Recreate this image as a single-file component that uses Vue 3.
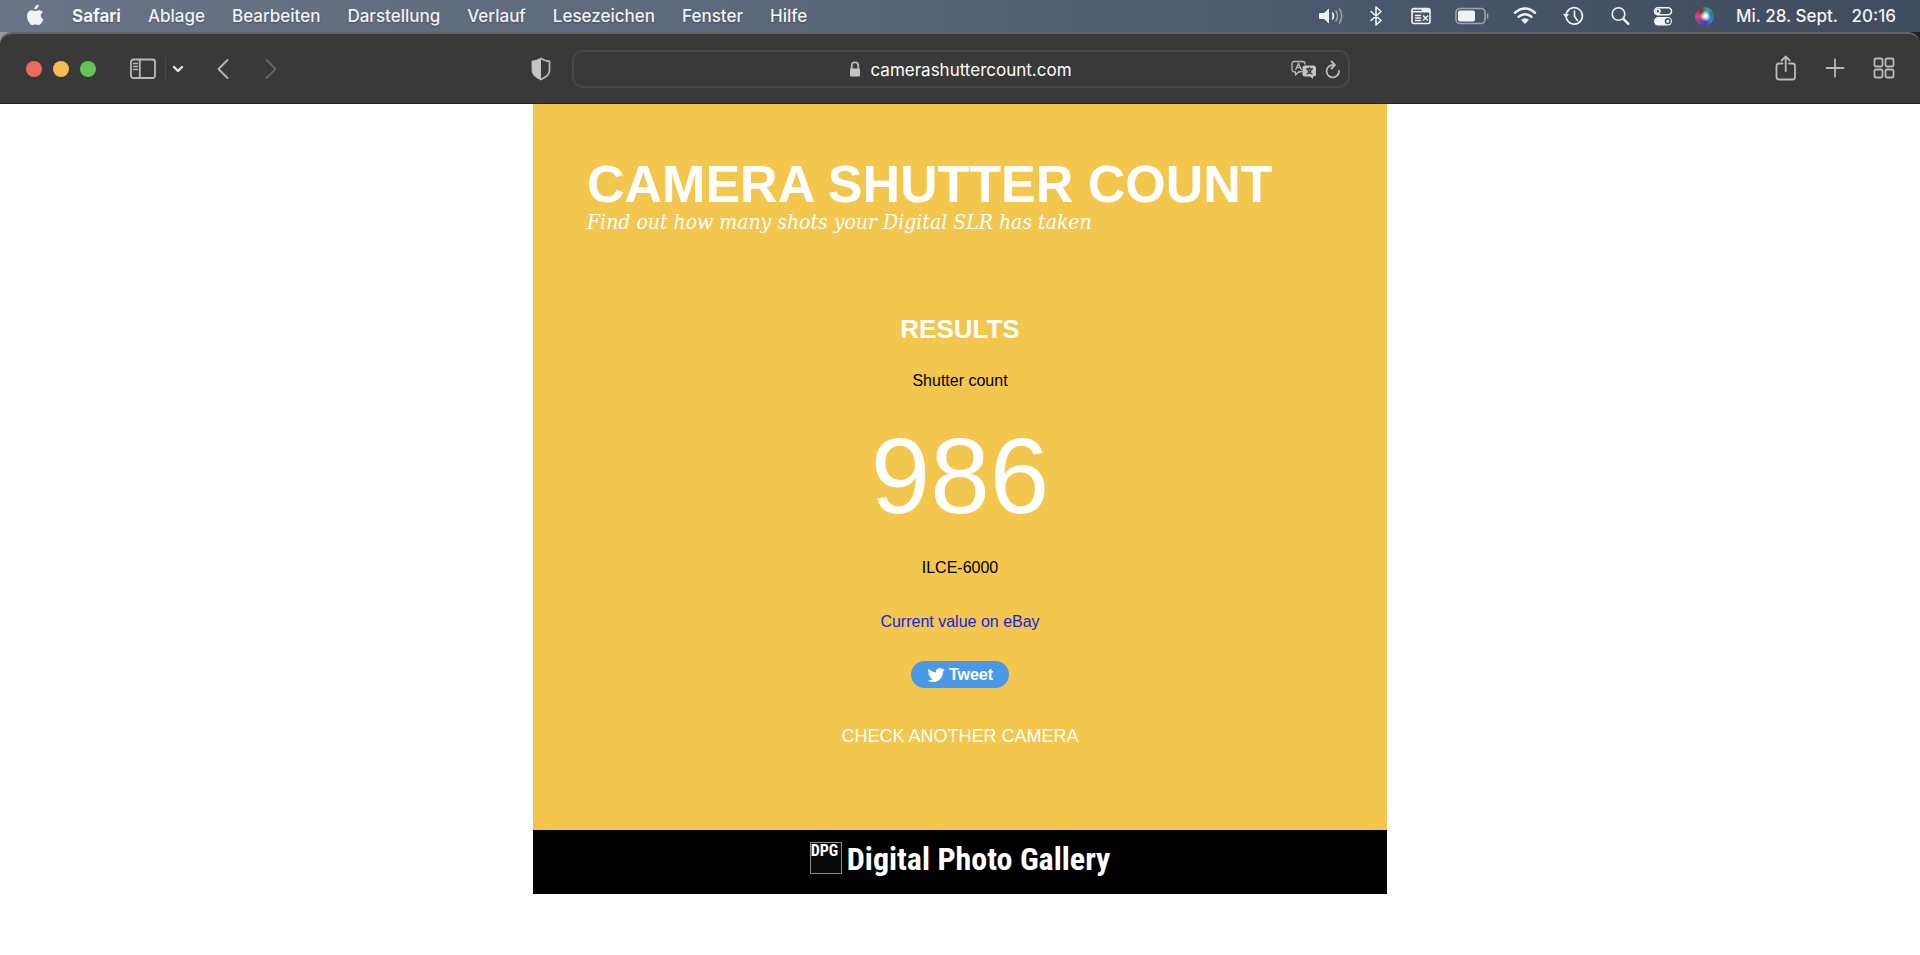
<template>
  <div class="desktop">
    <header class="menubar">
      <nav class="menus">
        <svg class="apple" width="20" height="24" viewBox="0 0 20 24">
          <path d="M13.6 0.6c.2 1.300-.3 2.500-1.100 3.400-.8.900-1.900 1.500-3 1.400-.2-1.200.4-2.400 1.100-3.200.8-.900 2-1.500 3-1.600zM17.800 8.200c-1.300.8-2 1.900-2 3.400 0 1.700 1 3 2.600 3.700-.4 1.300-1.100 2.600-2 3.800-.9 1.200-1.700 2-2.900 2-1.200 0-1.600-.7-3.100-.7-1.500 0-2 .7-3.100.7-1.200 0-2.100-1-3-2.300C2.900 16.900 2 14.500 2 12.100c0-3.600 2.300-5.900 4.800-5.900 1.300 0 2.500.9 3.400.9.800 0 2.200-1 3.900-.9 1.500 0 2.800.7 3.700 2z" />
        </svg>
        <a v-for="item in menus" :key="item" href="#" @click.prevent>{{ item }}</a>
      </nav>

      <div class="status">
        <svg width="24" height="22" viewBox="0 0 24 22">
          <path class="fill" d="M1 8h4l5-4.500v15L5 14H1q-1 0-1-1V9q0-1 1-1z" />
          <path d="M13.500 8q2 3 0 6" />
          <path class="dim" d="M17 6q3 5 0 10M20.500 4q4.500 7 0 14" />
        </svg>
        <svg width="22" height="22" viewBox="0 0 22 22">
          <path d="M6 6.500l10 9-5 4.500V2l5 4.500-10 9" />
        </svg>
        <svg width="24" height="22" viewBox="0 0 24 22">
          <rect x="3" y="3.500" width="18" height="15" rx="2" />
          <path class="fill" d="M3 3.500h18v4H3z" />
          <path class="hole" d="M4.500 5.200h1.500M7.500 5.200h1.500M10.500 5.200h1.500" />
          <path d="M6.500 10.500h5M6.500 13h5M6.500 15.500h5M14.500 11l4 4M18.500 11l-4 4" />
        </svg>
        <svg width="34" height="22" viewBox="0 0 34 22">
          <rect class="dim" x="1" y="3.500" width="29" height="15" rx="4" />
          <rect class="fill" x="3" y="5.500" width="17" height="11" rx="2" />
          <path class="dim" d="M32.500 9v4" />
        </svg>
        <svg width="28" height="22" viewBox="0 0 28 22">
          <path class="thick" d="M4 7.700q10-8.200 20 0M7.600 11.800q6.400-5.200 12.800 0" />
          <path class="fill" d="M10 14.800q4-3.300 8 0l-4 4.200z" />
        </svg>
        <svg width="26" height="22" viewBox="0 0 26 22">
          <path d="M5.300 13a8.200 8.200 0 1 0 .7-6L4.900 9.500M13.500 6v5.500l3 4" />
          <path class="fill" d="M2 9h6l-3 4z" />
        </svg>
        <svg width="22" height="22" viewBox="0 0 22 22">
          <circle cx="9.500" cy="9" r="6.300" />
          <path class="thick" d="M14.300 13.800l5 5" />
        </svg>
        <svg width="20" height="22" viewBox="0 0 20 22">
          <rect x="1.500" y="2.800" width="17" height="7" rx="3.500" />
          <circle cx="5" cy="6.300" r="2" />
          <rect class="fill" x="1" y="12" width="18" height="8.500" rx="4.200" />
          <circle class="hole" cx="14.800" cy="16.200" r="2.300" />
        </svg>
        <span class="siri"></span>
        <time datetime="2022-09-28T20:16">Mi. 28. Sept.&nbsp;&nbsp; 20:16</time>
      </div>
    </header>

    <div class="window">
      <div class="toolbar">
        <div class="tools">
          <div class="lights">
            <button class="light red" aria-label="Schließen"></button>
            <button class="light yellow" aria-label="Minimieren"></button>
            <button class="light green" aria-label="Vollbild"></button>
          </div>
          <button class="icon sidebar" aria-label="Seitenleiste">
            <svg width="26" height="22" viewBox="0 0 26 22">
              <rect x="1" y="1.500" width="24" height="18.500" rx="2.500" />
              <path d="M9.800 1.500V20" />
              <path class="thin" d="M3.500 5.500h4M3.500 8.500h4M3.500 11.500h4" />
            </svg>
          </button>
          <span class="divider"></span>
          <button class="icon chevron" aria-label="Tabgruppen">
            <svg width="12" height="22" viewBox="0 0 12 22">
              <path class="bold" d="M2 9l4 4 4-4" />
            </svg>
          </button>
          <button class="icon back" aria-label="Zurück">
            <svg width="12" height="22" viewBox="0 0 12 22">
              <path d="M10.500 2L1.500 11l9 9" />
            </svg>
          </button>
          <button class="icon forward" aria-label="Vorwärts" disabled>
            <svg width="12" height="22" viewBox="0 0 12 22">
              <path d="M1.500 2l9 9-9 9" />
            </svg>
          </button>
          <button class="icon shield" aria-label="Datenschutzbericht">
            <svg width="20" height="24" viewBox="0 0 20 24">
              <path d="M10 1.500q4 2.500 8.500 3v9q0 5-8.500 9-8.500-4-8.500-9v-9q4.500-.5 8.500-3z" />
              <path class="solid" d="M10 1.500q-4 2.500-8.500 3v9q0 5 8.500 9z" />
            </svg>
          </button>
        </div>

        <form class="address" @submit.prevent>
          <label class="location">
            <svg width="12" height="17" viewBox="0 0 12 17">
              <path d="M2.800 8V4.500q0-3.200 3.200-3.200t3.200 3.200V8" />
              <rect class="solid" x="1" y="7.500" width="10" height="8" rx="1" />
            </svg>
            <input v-model="url" type="text" aria-label="Adresse" spellcheck="false" />
          </label>
          <div class="page-actions">
            <button class="icon" type="button" aria-label="Übersetzen">
              <svg width="26" height="20" viewBox="0 0 26 20">
                <path class="thin" d="M11 11.500L7.500 12 4.500 15v-3H3.500q-2.500 0-2.500-2.500v-6Q1 1.500 3.500 1.500h8Q14 1.500 14 4" />
                <path class="thin" d="M4.700 9.500l2.800-6 2.800 6M5.700 7.700h3.600" />
                <path class="solid" d="M14 5.500h8.500q2.500 0 2.500 2.500v6q0 2.500-2.500 2.500h-.5v2.500l-3-2.500h-5q-2.500 0-2.500-2.500V8q0-2.500 2.500-2.500z" />
                <path class="cut" d="M15.500 9h6M18.500 7.500V9M16.500 9q1 3.500 4.500 5M20.500 9q-1 3.500-4.500 5" />
              </svg>
            </button>
            <button class="icon" type="button" aria-label="Neu laden">
              <svg width="16" height="20" viewBox="0 0 16 20">
                <path d="M7.500 5a6.200 6.200 0 1 0 6.500 6M6.500 1.500L10 5 6.500 8.500" />
              </svg>
            </button>
          </div>
        </form>

        <div class="tools actions">
          <button class="icon" aria-label="Teilen">
            <svg width="22" height="28" viewBox="0 0 22 28">
              <path d="M7.500 8.500H4Q1.500 8.500 1.500 11v11Q1.500 24.500 4 24.500h13.500q2.500 0 2.500-2.500V11q0-2.500-2.500-2.500H14M10.700 16V1.500M6.700 5.500l4-4 4 4" />
            </svg>
          </button>
          <button class="icon" aria-label="Neuer Tab">
            <svg width="20" height="22" viewBox="0 0 20 22">
              <path d="M10 1.500v17M1.500 10h17" />
            </svg>
          </button>
          <button class="icon" aria-label="Tabübersicht">
            <svg width="22" height="24" viewBox="0 0 22 24">
              <rect x="1.500" y="1.500" width="8" height="8" rx="1.500" />
              <rect x="12.500" y="1.500" width="8" height="8" rx="1.500" />
              <rect x="1.500" y="12.500" width="8" height="8" rx="1.500" />
              <rect x="12.500" y="12.500" width="8" height="8" rx="1.500" />
            </svg>
          </button>
        </div>
      </div>

      <div class="page">
        <main class="content">
          <h1>CAMERA SHUTTER COUNT</h1>
          <p class="tagline">Find out how many shots your Digital SLR has taken</p>

          <section class="results">
            <h2>RESULTS</h2>
            <p class="label">Shutter count</p>
            <p class="count">{{ result.count }}</p>
            <p class="model">{{ result.model }}</p>
            <a class="ebay" href="#" @click.prevent>Current value on eBay</a>
            <button class="tweet">
              <svg width="18" height="18" viewBox="0 0 24 24">
                <path d="M23.600 4.900c-.8.400-1.700.6-2.700.8 1-.6 1.700-1.500 2.100-2.600-.9.500-1.900.9-3 1.100A4.700 4.700 0 0 0 12 8.500C8.100 8.300 4.600 6.400 2.300 3.600a4.700 4.700 0 0 0 1.500 6.300c-.8 0-1.500-.2-2.100-.6 0 2.300 1.600 4.300 3.800 4.700-.7.200-1.400.2-2.100.1a4.700 4.700 0 0 0 4.400 3.300A9.500 9.500 0 0 1 .8 19.300 13.400 13.400 0 0 0 8 21.400c8.800 0 13.700-7.400 13.300-14.100.9-.6 1.700-1.500 2.300-2.400z" />
              </svg>
              Tweet
            </button>
            <a class="again" href="#" @click.prevent>CHECK ANOTHER CAMERA</a>
          </section>
        </main>

        <footer class="footer">
          <a class="logo" href="#" @click.prevent>
            <span class="logo-mark">DPG</span>
            <span>Digital Photo Gallery</span>
          </a>
        </footer>
      </div>
    </div>
  </div>
</template>

<script setup>
import { ref } from 'vue'

const menus = [
  'Safari',
  'Ablage',
  'Bearbeiten',
  'Darstellung',
  'Verlauf',
  'Lesezeichen',
  'Fenster',
  'Hilfe',
]

const url = ref('camerashuttercount.com')

const result = ref({
  count: 986,
  model: 'ILCE-6000',
})
</script>

<style>
body {
  margin: 0;
  background: #fff;
}
</style>

<style scoped>
.desktop {
  min-height: 100vh;
  background: linear-gradient(90deg, #999, #4a5568 30%, #1b222e) top / 100% 60px no-repeat;
  font-family: Inter, "Liberation Sans", sans-serif;
}
h1,
h2,
p {
  margin: 0;
}
a {
  color: inherit;
  text-decoration: none;
}
button {
  padding: 0;
  border: none;
  background: none;
  font-family: inherit;
}
svg {
  display: block;
  flex: none;
}

/* menu bar */
.menubar {
  display: flex;
  justify-content: space-between;
  align-items: center;
  height: 32px;
  padding: 0 24px 0 25px;
  box-sizing: border-box;
  background: linear-gradient(90deg, #6b7486, #5c677b 40%, #485469 75%, #404b5f);
  color: #f2f3f5;
  font-size: 17px;
  font-weight: 500;
  line-height: 30px;
  white-space: nowrap;
}
.menus,
.status {
  display: flex;
  align-items: center;
}
.menus {
  gap: 27px;
  text-shadow: 0 1px 2px rgba(0, 0, 0, 0.3);
}
.menus a:first-of-type {
  font-weight: 700;
}
.apple {
  fill: #f2f3f5;
}
.status {
  gap: 22px;
}
.status svg {
  fill: none;
  stroke: #f2f3f5;
  stroke-width: 1.6;
  stroke-linecap: round;
  stroke-linejoin: round;
}
.status .fill {
  fill: #f2f3f5;
  stroke: none;
}
.status .hole {
  stroke: #485469;
}
.status .dim {
  opacity: 0.5;
}
.status .thick {
  stroke-width: 2.4;
}
.siri {
  width: 19px;
  height: 19px;
  border-radius: 50%;
  background:
    radial-gradient(circle at 55% 48%, #fff 8%, rgba(255, 255, 255, 0) 38%),
    conic-gradient(from 20deg, #3aa787, #31758c, #3b7fd0, #2f4b9c, #8c3fa0, #e0457a, #71324c, #3aa787);
}

/* browser window */
.window {
  overflow: hidden;
  border-top: 2px solid #656565;
  border-radius: 12px 12px 0 0;
}
.toolbar {
  display: grid;
  grid-template-columns: 1fr minmax(0, 778px) 1fr;
  align-items: center;
  column-gap: 21px;
  height: 70px;
  padding: 0 25px 0 26px;
  box-sizing: border-box;
  border-bottom: 1px solid #202121;
  background: #383938;
}
.tools {
  display: flex;
  align-items: center;
}
.actions {
  justify-content: flex-end;
  gap: 28px;
}
.lights {
  display: flex;
  gap: 11px;
}
.light {
  width: 16px;
  height: 16px;
  border-radius: 50%;
}
.red {
  background: #ed6a5f;
}
.yellow {
  background: #f5bd4f;
}
.green {
  background: #61c455;
}
.toolbar svg {
  fill: none;
  stroke: #b9baba;
  stroke-width: 1.8;
  stroke-linecap: round;
  stroke-linejoin: round;
}
.toolbar .solid {
  fill: #c4c5c5;
  stroke: none;
}
.toolbar .thin {
  stroke-width: 1.3;
}
.toolbar .bold {
  stroke: #e4e4e4;
  stroke-width: 2.4;
}
.toolbar .cut {
  stroke: #383938;
  stroke-width: 1.3;
}
.sidebar {
  margin-left: 34px;
}
.divider {
  width: 1px;
  height: 24px;
  margin: 0 6px 0 9px;
  background: #4a4b4a;
}
.back {
  margin-left: 33px;
}
.forward {
  margin-left: 36px;
}
.forward svg {
  opacity: 0.35;
}
.shield {
  margin-left: auto;
}
.address {
  display: grid;
  grid-template-columns: 1fr auto 1fr;
  align-items: center;
  height: 38px;
  box-sizing: border-box;
  padding: 2px 7px 0;
  border: 2px solid #474847;
  border-radius: 11px;
}
.location {
  display: flex;
  grid-column: 2;
  align-items: center;
  gap: 9px;
}
.location input {
  field-sizing: content;
  padding: 0;
  border: none;
  outline: none;
  background: none;
  color: #fff;
  font-family: inherit;
  font-size: 17px;
}
.page-actions {
  display: flex;
  justify-content: flex-end;
  gap: 8px;
}

/* web page */
.page {
  min-height: calc(100vh - 104px);
  background: #fff;
  font-family: "Helvetica Neue", "Liberation Sans", Arial, sans-serif;
}
.content,
.footer {
  max-width: 854px;
  margin: 0 auto;
  box-sizing: border-box;
}
.content {
  padding: 53px 54px 84px;
  background: #f3c64e;
  color: #fff;
}
h1 {
  font-size: 52px;
  line-height: 54px;
}
.tagline {
  font-family: Georgia, "DejaVu Serif Condensed", "DejaVu Serif", serif;
  font-size: 21px;
  font-style: italic;
  line-height: 22px;
}
.results {
  display: flex;
  flex-direction: column;
  align-items: center;
  margin-top: 81px;
  font-size: 16px;
  line-height: 20px;
}
h2 {
  font-size: 26px;
  line-height: 30px;
}
.label {
  margin-top: 27px;
  color: #000;
}
.count {
  margin-top: 25px;
  font-size: 107px;
  line-height: 120px;
}
.model {
  margin-top: 22px;
  color: #000;
}
.ebay {
  margin-top: 34px;
  color: #1423e0;
}
.tweet {
  display: flex;
  align-items: center;
  gap: 4px;
  height: 27px;
  margin-top: 29px;
  padding: 0 16px;
  border-radius: 14px;
  background: #4a99e9;
  color: #fff;
  font-size: 16px;
  font-weight: 700;
}
.tweet svg {
  fill: #fff;
}
.again {
  margin-top: 38px;
  font-size: 18px;
}
.footer {
  display: flex;
  justify-content: center;
  height: 64px;
  padding-top: 12px;
  background: #000;
}
.logo {
  display: flex;
  align-items: flex-start;
  gap: 5px;
  color: #fff;
  font-family: "Liberation Sans Narrow", "Roboto Condensed", "Liberation Sans", sans-serif;
  font-size: 32px;
  font-weight: 700;
  line-height: 34px;
}
.logo-mark {
  width: 30px;
  height: 30px;
  border: 1px solid #8a8a8a;
  background: #0a0a0a;
  font-size: 16px;
  line-height: 16px;
}
</style>
